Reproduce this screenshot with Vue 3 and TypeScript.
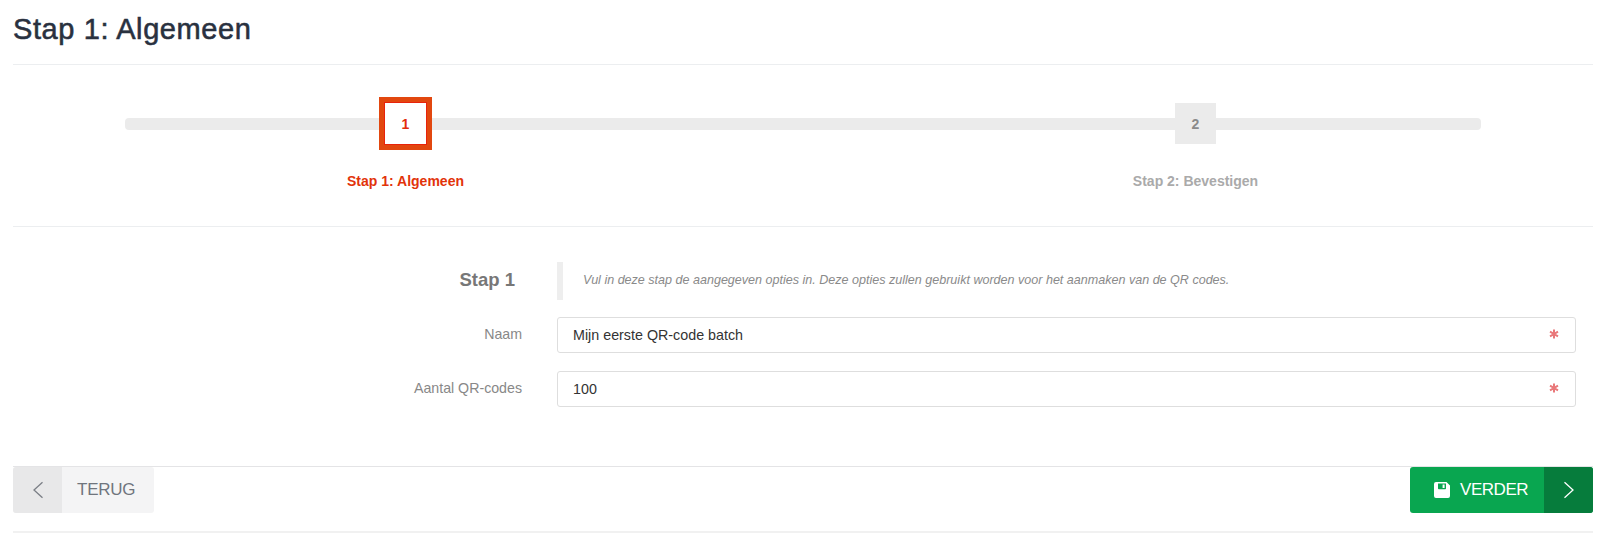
<script setup lang="ts">
const steps = [
  { n: 1, label: 'Stap 1: Algemeen', active: true },
  { n: 2, label: 'Stap 2: Bevestigen', active: false },
]
const fields = [
  { label: 'Naam', value: 'Mijn eerste QR-code batch' },
  { label: 'Aantal QR-codes', value: '100' },
]
</script>

<template>
  <div class="page">
    <h1 class="title">Stap 1: Algemeen</h1>
    <div class="wizard">
      <div class="track"></div>
      <div v-for="s in steps" :key="s.n" class="step" :class="{ active: s.active }">
        <div class="box-slot"><div class="box">{{ s.n }}</div></div>
        <div class="label">{{ s.label }}</div>
      </div>
    </div>
    <div class="form">
      <div class="row intro">
        <div class="heading">Stap 1</div>
        <div class="note">Vul in deze stap de aangegeven opties in. Deze opties zullen gebruikt worden voor het aanmaken van de QR codes.</div>
      </div>
      <div v-for="f in fields" :key="f.label" class="row field">
        <label class="field-label">{{ f.label }}</label>
        <div class="input">
          <span>{{ f.value }}</span>
          <svg class="req" width="10" height="10" viewBox="0 0 10 10" aria-hidden="true">
            <path d="M5 0.4V9.6M1 2.7L9 7.3M9 2.7L1 7.3" stroke="#e9787a" stroke-width="2" fill="none" />
          </svg>
        </div>
      </div>
    </div>
    <div class="actions">
      <div class="btn back">
        <span class="cap">
          <svg width="12" height="18" viewBox="0 0 12 18" aria-hidden="true"><path d="M10.5 1.2L2 9l8.5 7.8" stroke="#7b7f86" stroke-width="1.3" fill="none" /></svg>
        </span>
        <span class="text">TERUG</span>
      </div>
      <div class="btn next">
        <span class="text">
          <svg width="16" height="16" viewBox="0 0 16 16" aria-hidden="true">
            <path fill-rule="evenodd" d="M2 0h10.5L16 3.5V14a2 2 0 0 1-2 2H2a2 2 0 0 1-2-2V2a2 2 0 0 1 2-2zM4 1.5V6.5a.8.8 0 0 0 .8.8h6.4a.8.8 0 0 0 .8-.8V1.5zM8.6 2.6h2v3.4h-2z" fill="#fff" />
          </svg>
          VERDER
        </span>
        <span class="cap">
          <svg width="12" height="18" viewBox="0 0 12 18" aria-hidden="true"><path d="M1.5 1.2L10 9l-8.5 7.8" stroke="#fff" stroke-width="1.3" fill="none" /></svg>
        </span>
      </div>
    </div>
  </div>
</template>

<style>
html, body { margin: 0; background: #fff; }
</style>

<style scoped>
.page {
  box-sizing: border-box;
  width: 1600px;
  height: 535px;
  padding: 0 7px 0 13px;
  font-family: "Liberation Sans", Arial, sans-serif;
  overflow: hidden;
}
.title {
  margin: 0;
  height: 65px;
  box-sizing: border-box;
  padding-top: 13px;
  border-bottom: 1px solid #eceef0;
  font-size: 29px;
  line-height: 32px;
  letter-spacing: 0.6px;
  font-weight: 400;
  color: #29313f;
  -webkit-text-stroke: 0.55px #29313f;
}
.wizard {
  position: relative;
  display: grid;
  grid-template-columns: 785px 795px;
  height: 162px;
  box-sizing: border-box;
  border-bottom: 1px solid #eceef0;
}
.track {
  position: absolute;
  left: 112px;
  top: 53px;
  width: 1356px;
  height: 12px;
  border-radius: 4px;
  background: #ebebeb;
}
.step {
  position: relative;
  display: flex;
  flex-direction: column;
  align-items: center;
}
.box-slot {
  height: 53px;
  margin-top: 32px;
  display: flex;
  align-items: center;
}
.box {
  box-sizing: border-box;
  width: 41px;
  height: 41px;
  padding-top: 1px;
  background: #ebebeb;
  color: #8a8a8a;
  font-size: 14px;
  font-weight: 700;
  display: flex;
  align-items: center;
  justify-content: center;
}
.active .box {
  width: 53px;
  height: 53px;
  background: #fff;
  border: 6px solid #e2470f;
  outline: 1px solid #e8230a;
  outline-offset: -6px;
  color: #e32c0c;
}
.label {
  margin-top: 23px;
  font-size: 14px;
  line-height: 16px;
  font-weight: 700;
  color: #aaaaaa;
}
.active .label { color: #e2330a; }
.form {
  padding-top: 35px;
  height: 240px;
  box-sizing: border-box;
  border-bottom: 1px solid #e4e4e6;
}
.row {
  display: grid;
  grid-template-columns: 509px 1fr;
  column-gap: 35px;
  margin-right: 17px;
}
.intro {
  height: 38px;
  margin-bottom: 17px;
}
.heading {
  padding-top: 8px;
  padding-right: 7px;
  text-align: right;
  font-size: 18.5px;
  line-height: 20px;
  font-weight: 700;
  color: #777777;
}
.note {
  box-sizing: border-box;
  border-left: 6px solid #eeeeee;
  padding: 0 0 0 20px;
  font-size: 12.55px;
  line-height: 37px;
  font-style: italic;
  color: #8a8a8a;
}
.field {
  height: 36px;
  margin-bottom: 18px;
}
.field-label {
  padding-top: 8px;
  text-align: right;
  font-size: 14.2px;
  line-height: 18px;
  color: #888888;
}
.input {
  box-sizing: border-box;
  border: 1px solid #dedede;
  border-radius: 3px;
  padding: 0 16px 0 15px;
  display: flex;
  align-items: center;
  justify-content: space-between;
  font-size: 14.3px;
  color: #333333;
}
.req { margin-top: -3px; }
.actions {
  display: flex;
  justify-content: space-between;
  height: 66px;
  border-bottom: 2px solid #f1f1f1;
  box-sizing: border-box;
}
.btn {
  display: flex;
  height: 46px;
  border-radius: 3px;
  overflow: hidden;
  font-size: 17px;
  letter-spacing: -0.25px;
}
.btn .cap {
  width: 49px;
  display: flex;
  align-items: center;
  justify-content: center;
}
.btn .text {
  display: flex;
  align-items: center;
}
.back { background: #f4f4f5; color: #70757d; width: 141px; }
.back .cap { background: #e8e8e9; }
.back .text { padding-left: 15px; }
.next { background: #09a650; color: #fff; width: 183px; letter-spacing: -0.45px; }
.next .text {
  flex: 1;
  padding-left: 24px;
  gap: 10px;
}
.next .cap { background: #067c3c; }
</style>
